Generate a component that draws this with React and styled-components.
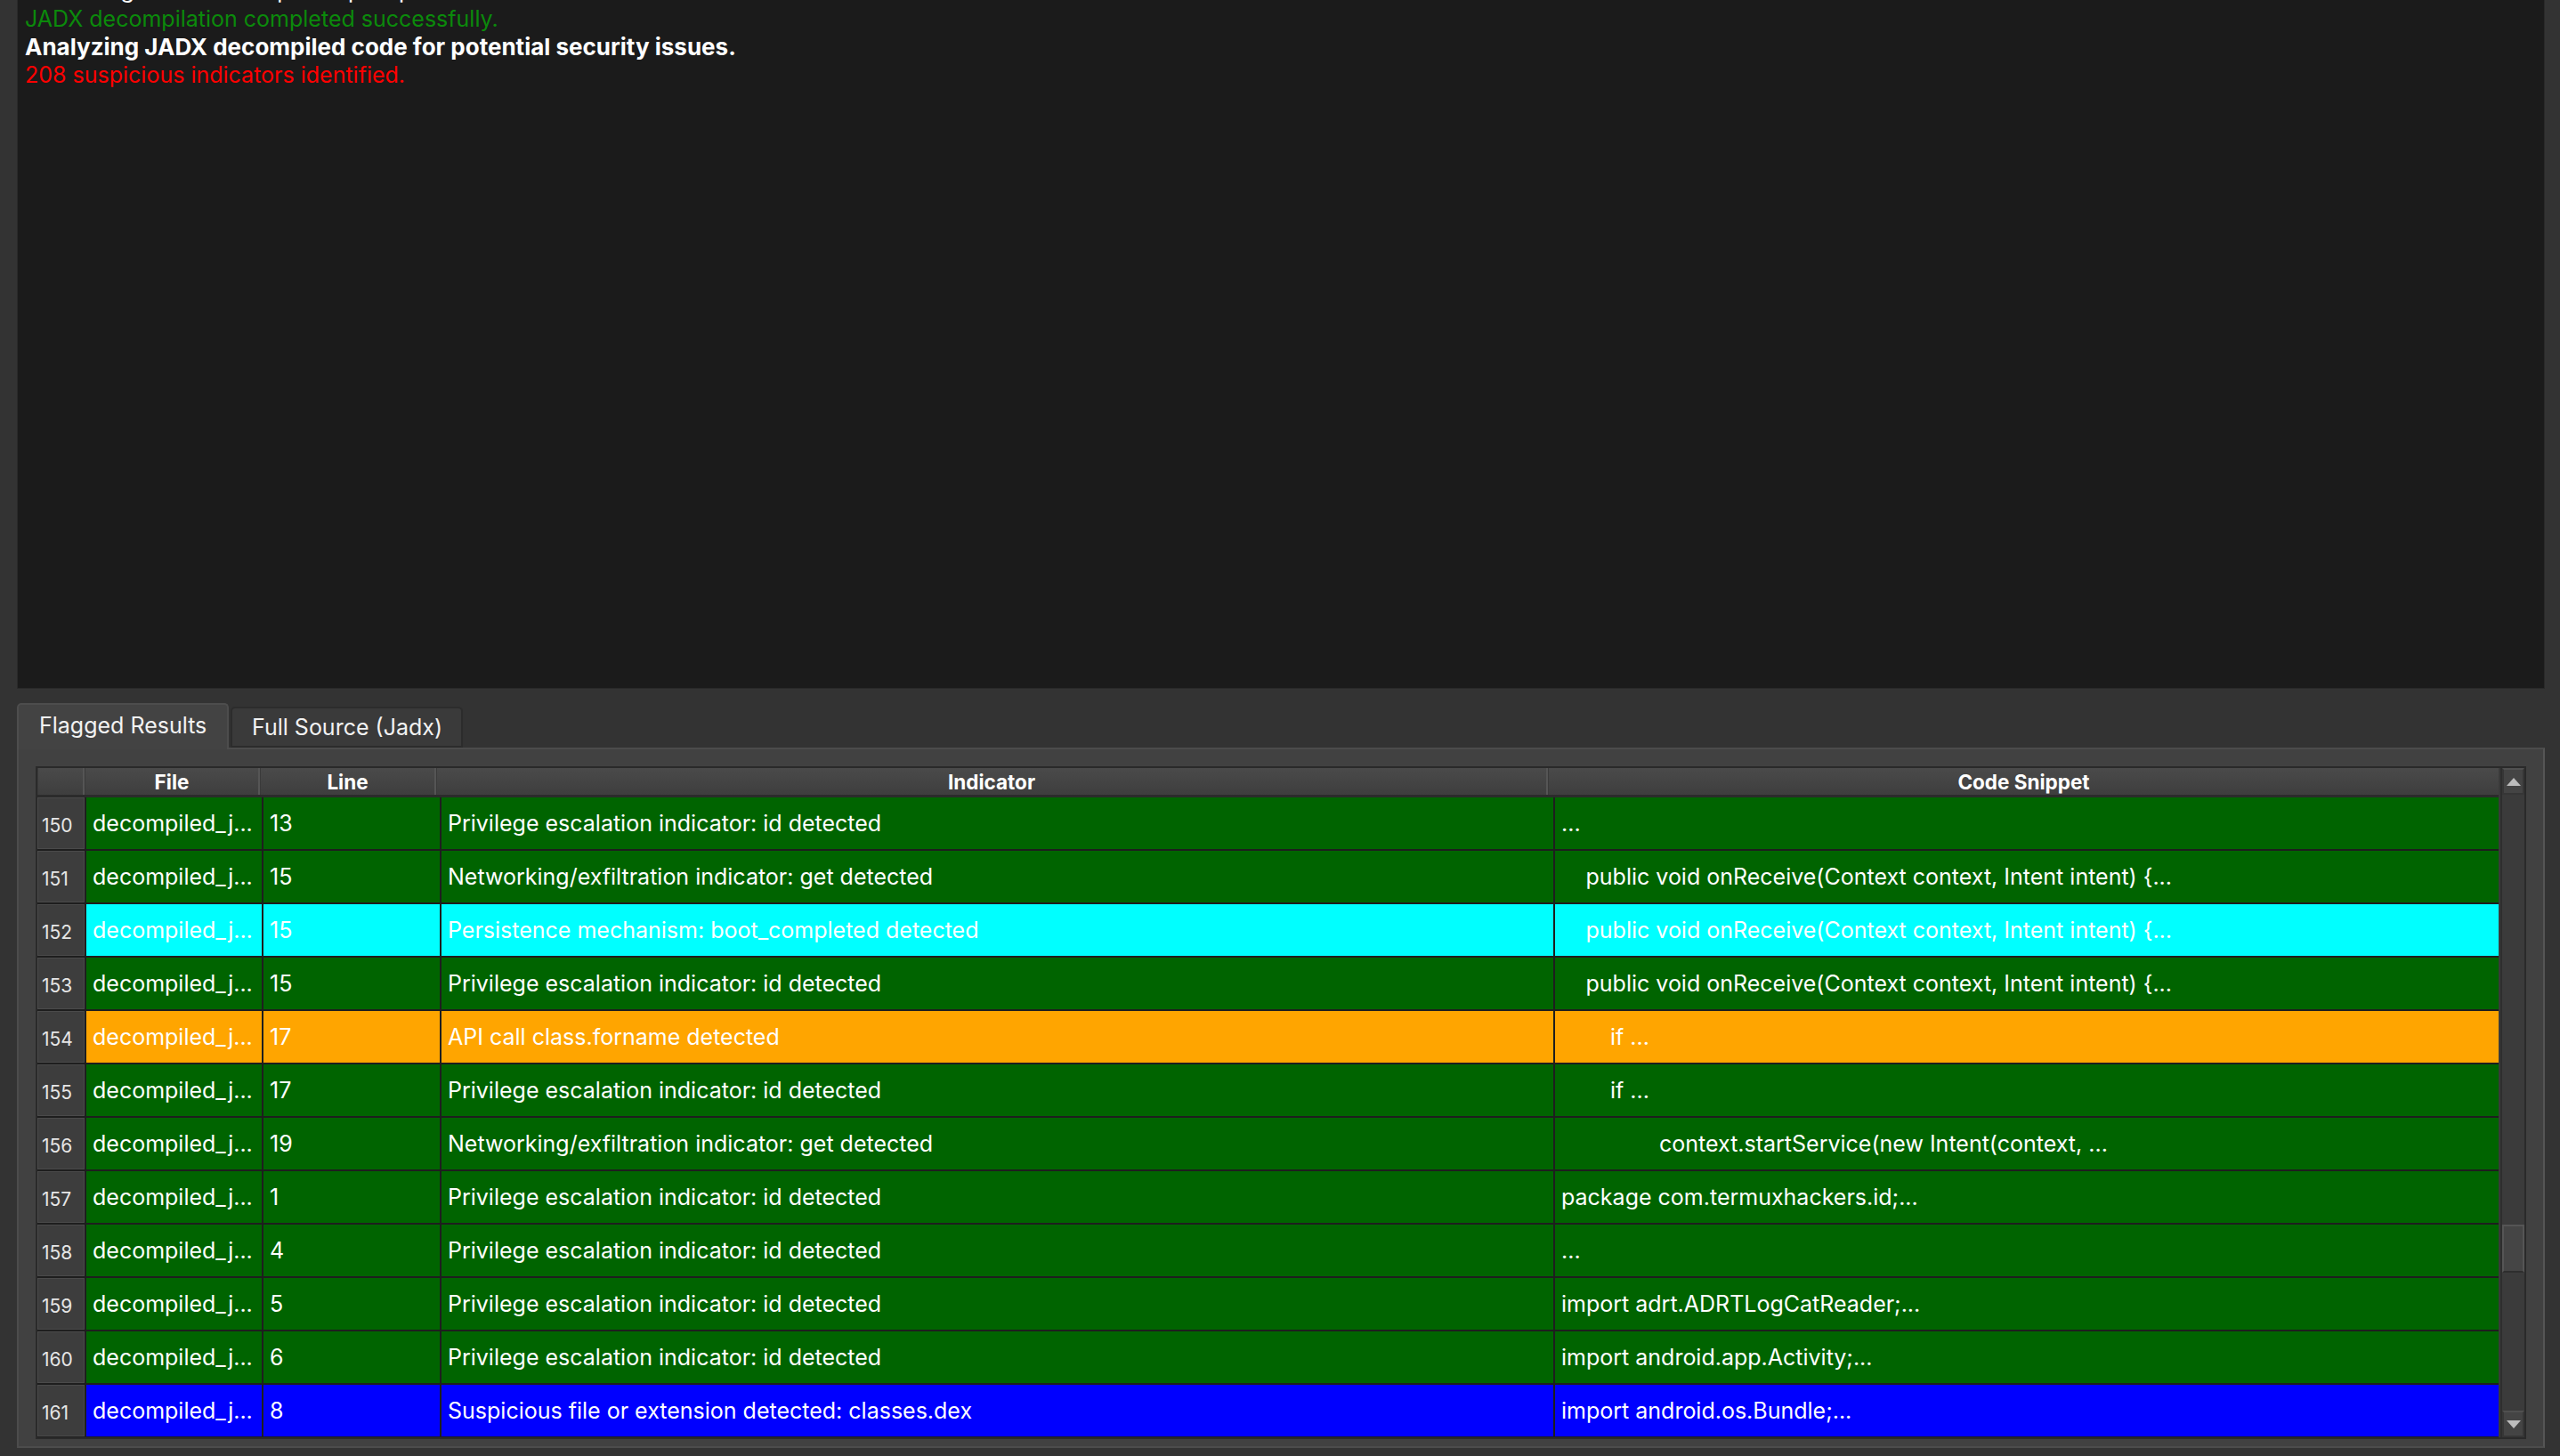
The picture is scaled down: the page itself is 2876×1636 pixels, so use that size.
import React from 'react'
import styled, { createGlobalStyle } from 'styled-components'

const GlobalStyle = createGlobalStyle`
	html, body {
		margin: 0;
		padding: 0;
		background: #333333;
		overflow: hidden;
	}
	* {
		box-sizing: border-box;
	}
`

const ROW_COLORS = {
	green: '#006400',
	cyan: '#00ffff',
	orange: '#ffa500',
	blue: '#0000ff',
}

const results = [
	{ n: 150, line: '13', ind: 'Privilege escalation indicator: id detected', snip: '...', lvl: 0, tone: 'green' },
	{ n: 151, line: '15', ind: 'Networking/exfiltration indicator: get detected', snip: 'public void onReceive(Context context, Intent intent) {...', lvl: 1, tone: 'green' },
	{ n: 152, line: '15', ind: 'Persistence mechanism: boot_completed detected', snip: 'public void onReceive(Context context, Intent intent) {...', lvl: 1, tone: 'cyan' },
	{ n: 153, line: '15', ind: 'Privilege escalation indicator: id detected', snip: 'public void onReceive(Context context, Intent intent) {...', lvl: 1, tone: 'green' },
	{ n: 154, line: '17', ind: 'API call class.forname detected', snip: 'if ...', lvl: 2, tone: 'orange' },
	{ n: 155, line: '17', ind: 'Privilege escalation indicator: id detected', snip: 'if ...', lvl: 2, tone: 'green' },
	{ n: 156, line: '19', ind: 'Networking/exfiltration indicator: get detected', snip: 'context.startService(new Intent(context, ...', lvl: 4, tone: 'green' },
	{ n: 157, line: '1', ind: 'Privilege escalation indicator: id detected', snip: 'package com.termuxhackers.id;...', lvl: 0, tone: 'green' },
	{ n: 158, line: '4', ind: 'Privilege escalation indicator: id detected', snip: '...', lvl: 0, tone: 'green' },
	{ n: 159, line: '5', ind: 'Privilege escalation indicator: id detected', snip: 'import adrt.ADRTLogCatReader;...', lvl: 0, tone: 'green' },
	{ n: 160, line: '6', ind: 'Privilege escalation indicator: id detected', snip: 'import android.app.Activity;...', lvl: 0, tone: 'green' },
	{ n: 161, line: '8', ind: 'Suspicious file or extension detected: classes.dex', snip: 'import android.os.Bundle;...', lvl: 0, tone: 'blue' },
]

const COLUMNS = '53px 197px 198px 1249px 1fr'

export default function App() {
	return (
		<>
			<GlobalStyle />
			<Window>
				<LogPanel>
					<LogScroll>
						<LogLine $tone="plain">Launching JADX decompiler: apk input...</LogLine>
						<LogLine $tone="ok">JADX decompilation completed successfully.</LogLine>
						<LogLine $tone="bold">Analyzing JADX decompiled code for potential security issues.</LogLine>
						<LogLine $tone="alert">208 suspicious indicators identified.</LogLine>
					</LogScroll>
				</LogPanel>

				<TabBar>
					<Tab $active>Flagged Results</Tab>
					<Tab>Full Source (Jadx)</Tab>
				</TabBar>

				<TabPane>
					<TableFrame>
						<TableBody>
							<HeaderRow>
								<HeaderCell />
								<HeaderCell>File</HeaderCell>
								<HeaderCell>Line</HeaderCell>
								<HeaderCell>Indicator</HeaderCell>
								<HeaderCell>Code Snippet</HeaderCell>
							</HeaderRow>
							<Rows>
								{results.map(r => (
									<React.Fragment key={r.n}>
										<RowNumber>{r.n}</RowNumber>
										<Cell $bg={ROW_COLORS[r.tone]}>decompiled_j...</Cell>
										<Cell $bg={ROW_COLORS[r.tone]}>{r.line}</Cell>
										<Cell $bg={ROW_COLORS[r.tone]}>{r.ind}</Cell>
										<Cell $bg={ROW_COLORS[r.tone]} $indent={r.lvl * 27.5}>
											{r.snip}
										</Cell>
									</React.Fragment>
								))}
							</Rows>
						</TableBody>
						<ScrollBar>
							<ScrollButton>
								<svg width="16" height="9" viewBox="0 0 16 9">
									<path d="M8 0 L16 9 L0 9 Z" fill="#bdbdbd" />
								</svg>
							</ScrollButton>
							<ScrollTrack>
								<ScrollThumb />
							</ScrollTrack>
							<ScrollButton>
								<svg width="16" height="9" viewBox="0 0 16 9">
									<path d="M0 0 L16 0 L8 9 Z" fill="#bdbdbd" />
								</svg>
							</ScrollButton>
						</ScrollBar>
					</TableFrame>
				</TabPane>
			</Window>
		</>
	)
}

const Window = styled.div`
	width: 100vw;
	height: 100vh;
	display: flex;
	flex-direction: column;
	padding: 0 17px 9px 19px;
	background: #333333;
	font-family: 'Inter', 'Liberation Sans', sans-serif;
	color: #ffffff;
`

const LogPanel = styled.div`
	height: 774px;
	flex: none;
	background: #1b1b1b;
	border: 1px solid #2a2a2a;
	border-top: none;
	overflow: hidden;
	padding: 0 8px;
`

const LogScroll = styled.div`
	margin-top: -26px;
`

const toneColor = {
	plain: '#ffffff',
	ok: '#0b8a0b',
	bold: '#ffffff',
	alert: '#ff0000',
}

const LogLine = styled.div`
	font-size: ${p => (p.$tone === 'bold' ? '26px' : '25px')};
	line-height: 31.5px;
	white-space: pre;
	color: ${p => toneColor[p.$tone]};
	font-weight: ${p => (p.$tone === 'bold' ? 700 : 400)};
`

const TabBar = styled.div`
	display: flex;
	align-items: flex-end;
	gap: 2px;
	margin-top: 18px;
	height: 50px;
	flex: none;
	position: relative;
	z-index: 1;
	margin-bottom: -2px;
`

const Tab = styled.div`
	height: ${p => (p.$active ? '52px' : '46px')};
	margin-bottom: ${p => (p.$active ? '0' : '2px')};
	padding: ${p => (p.$active ? '0 20px 4px 23px' : '0 20px 0 22px')};
	display: flex;
	align-items: center;
	font-size: 25px;
	color: #f2f2f2;
	background: ${p => (p.$active ? '#434343' : '#3a3a3a')};
	border: 2px solid ${p => (p.$active ? '#4d4d4d' : '#2c2c2c')};
	border-bottom: ${p => (p.$active ? 'none' : '2px solid #2c2c2c')};
	border-radius: 5px 5px 0 0;
	width: ${p => (p.$active ? '238px' : '261px')};
`

const TabPane = styled.div`
	flex: 1;
	background: #414141;
	border: 2px solid #4c4c4c;
	border-right-color: #555555;
	padding: 19px 19px 0 19px;
	display: flex;
	align-items: flex-start;
`

const TableFrame = styled.div`
	flex: 1;
	display: flex;
	border: 2px solid #2a2a2a;
	background: #3a3a3a;
`

const TableBody = styled.div`
	flex: 1;
	display: flex;
	flex-direction: column;
`

const HeaderRow = styled.div`
	display: grid;
	grid-template-columns: ${COLUMNS};
	height: 33px;
	background: linear-gradient(#4a4a4a, #3e3e3e);
	border-bottom: 3px solid #2b2b2b;
`

const HeaderCell = styled.div`
	display: flex;
	align-items: center;
	justify-content: center;
	font-size: 22.5px;
	font-weight: 700;
	color: #ffffff;
	border-right: 2px solid #555555;
	border-left: 1px solid #3a3a3a;
	&:last-child {
		border-right: none;
	}
`

const Rows = styled.div`
	display: grid;
	grid-template-columns: ${COLUMNS};
	grid-auto-rows: 58px;
	gap: 2px;
	background: #1e1e1e;
	padding-bottom: 1px;
`

const RowNumber = styled.div`
	display: flex;
	align-items: center;
	padding-left: 4px;
	padding-top: 4px;
	font-size: 21px;
	color: #e6e6e6;
	background: #3d3d3d;
	border: 1px solid #4a4a4a;
`

const Cell = styled.div`
	display: flex;
	align-items: center;
	padding-left: ${p => 7 + (p.$indent || 0)}px;
	font-size: 25px;
	color: #ffffff;
	white-space: nowrap;
	overflow: hidden;
	background: ${p => p.$bg};
`

const ScrollBar = styled.div`
	width: 27px;
	flex: none;
	display: flex;
	flex-direction: column;
	background: #393939;
	border-left: 2px solid #2e2e2e;
	margin-left: 2px;
`

const ScrollButton = styled.div`
	height: 30px;
	flex: none;
	display: flex;
	align-items: center;
	justify-content: center;
	background: #444444;
	border: 2px solid #363636;
	border-top-color: #505050;
`

const ScrollTrack = styled.div`
	flex: 1;
	display: flex;
	flex-direction: column;
	justify-content: flex-end;
	padding-bottom: 155px;
	background: #3b3b3b;
`

const ScrollThumb = styled.div`
	height: 54px;
	background: #454545;
	border: 2px solid #555555;
	border-bottom-color: #2e2e2e;
`
